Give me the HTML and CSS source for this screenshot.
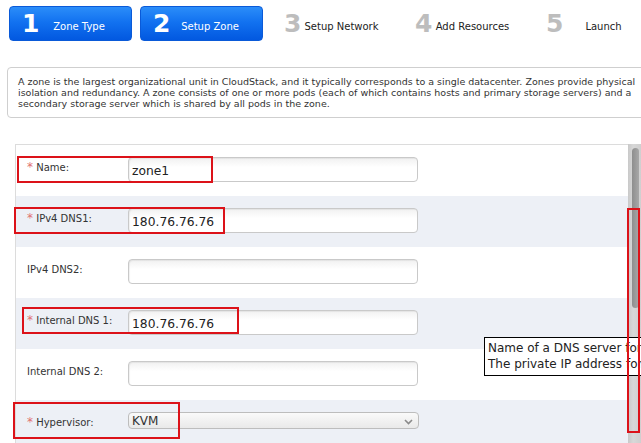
FILE: index.html
```html
<!DOCTYPE html>
<html>
<head>
<meta charset="utf-8">
<title>Add Zone</title>
<link rel="stylesheet" href="styles.css">
</head>
<body>
<div class="wizard">
  <ol class="steps">
    <li class="step active"><span class="num">1</span><span class="label">Zone Type</span></li>
    <li class="step active"><span class="num">2</span><span class="label">Setup Zone</span></li>
    <li class="step"><span class="num">3</span><span class="label">Setup Network</span></li>
    <li class="step"><span class="num">4</span><span class="label">Add Resources</span></li>
    <li class="step"><span class="num">5</span><span class="label">Launch</span></li>
  </ol>

  <div class="desc">A zone is the largest organizational unit in CloudStack, and it typically corresponds to a single datacenter. Zones provide physical<br>isolation and redundancy. A zone consists of one or more pods (each of which contains hosts and primary storage servers) and a<br>secondary storage server which is shared by all pods in the zone.</div>

  <div class="form-wrap">
    <div class="form-panel">
      <div class="row">
        <label class="lbl"><span class="req">*</span> Name:</label>
        <div class="field">zone1</div>
      </div>
      <div class="row alt">
        <label class="lbl"><span class="req">*</span> IPv4 DNS1:</label>
        <div class="field">180.76.76.76</div>
      </div>
      <div class="row">
        <label class="lbl">IPv4 DNS2:</label>
        <div class="field"></div>
      </div>
      <div class="row alt">
        <label class="lbl"><span class="req">*</span> Internal DNS 1:</label>
        <div class="field">180.76.76.76</div>
      </div>
      <div class="row">
        <label class="lbl">Internal DNS 2:</label>
        <div class="field"></div>
      </div>
      <div class="row alt">
        <label class="lbl lbl-sel"><span class="req">*</span> Hypervisor:</label>
        <div class="select">KVM<svg class="chev" width="9" height="6" viewBox="0 0 9 6"><path d="M1 1 L4.5 4.5 L8 1" fill="none" stroke="#8a8a8a" stroke-width="1.6"/></svg></div>
      </div>
    </div>
    <div class="scrollbar"><div class="thumb"></div></div>
  </div>

  <div class="tooltip">Name of a DNS server for use by system VMs in the zone.<br>The private IP address for the pods must have a route to this server.</div>

  <div class="mark mark-name"></div>
  <div class="mark mark-dns1"></div>
  <div class="mark mark-int1"></div>
  <div class="mark mark-hyp"></div>
  <div class="mark mark-scroll"></div>
</div>
</body>
</html>
```

FILE: styles.css
```css
html, body {
  margin: 0;
  padding: 0;
  background: #fff;
  overflow: hidden;
  width: 641px;
  height: 443px;
}
body {
  font-family: "DejaVu Sans", sans-serif;
  color: #222;
}
.wizard {
  position: relative;
  width: 641px;
  height: 443px;
}
.steps {
  list-style: none;
  margin: 0;
  padding: 6px 0 0 9px;
  display: flex;
  gap: 8px;
}
.step {
  width: 123px;
  height: 35px;
  box-sizing: border-box;
  display: flex;
  align-items: center;
  border-radius: 4px;
  flex: none;
}
.step .num {
  box-sizing: border-box;
  width: 26px;
  padding-left: 13px;
  font-size: 25px;
  font-weight: bold;
  color: #bdbdbd;
  line-height: 1;
  white-space: nowrap;
}
.step .label {
  flex: 1;
  text-align: center;
  padding: 6px 8px 0 0;
  font-size: 10px;
  color: #222;
  white-space: nowrap;
}
.step.active {
  background: linear-gradient(to bottom, #2b8df9 0%, #1272f0 45%, #0258e0 100%);
  border: 1px solid #0a5ad8;
}
.step.active .num {
  padding-left: 12px;
  width: 25px;
  color: #fff;
}
.step.active .label {
  color: #fff;
}
.desc {
  margin: 26px 0 0 7px;
  width: 660px;
  height: 51px;
  box-sizing: border-box;
  border: 1px solid #cfcfcf;
  border-radius: 4px;
  padding: 8px 0 0 10px;
  font-size: 9.5px;
  line-height: 11px;
  color: #333;
  white-space: nowrap;
}
.form-wrap {
  margin-top: 26px;
  padding-left: 15px;
  display: flex;
}
.form-panel {
  width: 613px;
  box-sizing: border-box;
  border-top: 1px solid #dcdcdc;
  border-left: 1px solid #dcdcdc;
}
.row {
  height: 51px;
  box-sizing: border-box;
  padding-top: 12px;
  display: flex;
  align-items: flex-start;
}
.row.alt {
  background: #edf0f6;
}
.lbl {
  box-sizing: border-box;
  width: 112px;
  padding-left: 11px;
  font-size: 10px;
  line-height: 21px;
  color: #333;
  white-space: nowrap;
}
.lbl-sel {
  line-height: 21px;
}
.req {
  color: #e07070;
  font-size: 12px;
}
.field {
  box-sizing: border-box;
  width: 290px;
  height: 25px;
  border: 1px solid #c9c9c9;
  border-radius: 4px;
  background: linear-gradient(to bottom, #f1f1f1 0%, #fff 40%);
  box-shadow: inset 1px 1px 1px rgba(0,0,0,0.06);
  padding-left: 3px;
  font-size: 12.3px;
  line-height: 26px;
  color: #222;
}
.select {
  box-sizing: border-box;
  width: 291px;
  height: 17px;
  border: 1px solid #bdbdbd;
  border-radius: 4px;
  background: linear-gradient(to bottom, #fafafa 0%, #e9e9e9 100%);
  padding: 2px 5px 0 3px;
  font-size: 12px;
  line-height: 15px;
  color: #333;
  display: flex;
  align-items: center;
  justify-content: space-between;
}
.chev {
  display: block;
}
.scrollbar {
  width: 13px;
  height: 300px;
  background: linear-gradient(to right, #c9c9c9, #d8d8d8 40%, #cfcfcf);
  box-sizing: border-box;
  padding: 4px 3px 0 4px;
}
.thumb {
  width: 7px;
  height: 160px;
  border-radius: 4px;
  background: linear-gradient(to right, #8e8e8e, #a8a8a8);
}
.tooltip {
  position: absolute;
  left: 484px;
  top: 337px;
  width: 400px;
  height: 39px;
  box-sizing: border-box;
  border: 1px solid #000;
  background: #fff;
  padding: 2px 0 0 3px;
  font-size: 12px;
  line-height: 16px;
  color: #222;
  white-space: nowrap;
}
.mark {
  position: absolute;
  border: 2px solid #dc1219;
  box-sizing: border-box;
}
.mark-name { left: 17px; top: 156px; width: 196px; height: 27px; }
.mark-dns1 { left: 14px; top: 207px; width: 211px; height: 27px; }
.mark-int1 { left: 22px; top: 307px; width: 217px; height: 27px; }
.mark-hyp { left: 13px; top: 402px; width: 167px; height: 37px; }
.mark-scroll { left: 627px; top: 208px; width: 13px; height: 225px; }
```
